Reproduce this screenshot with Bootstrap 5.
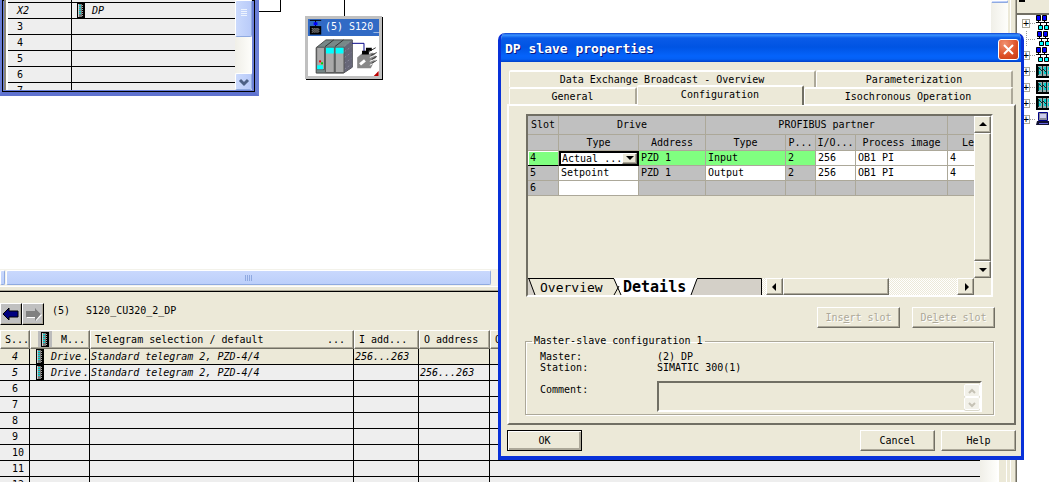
<!DOCTYPE html>
<html lang="en">
<head>
<meta charset="utf-8">
<meta name="viewport" content="width=device-width, initial-scale=1">
<title>DP slave properties</title>
<link href="https://cdn.jsdelivr.net/npm/bootstrap@5.3.0/dist/css/bootstrap.min.css" rel="stylesheet">
<style>
:root{--face:#ece9d8;--lo:#aca899;--dk:#716f64;--cell:#eee;--silver:#c0c0c0}
body{font:10px/16px "DejaVu Sans Mono","Liberation Mono",monospace;color:#000;background:#fff}
svg{display:block;flex:none}
.face{background:var(--face)}
button,select,textarea{font:inherit;color:inherit;border-radius:0}
.raised{background:var(--face);border:1px solid;border-color:#fff var(--dk) var(--dk) #fff;box-shadow:inset -1px -1px var(--lo);padding:0}
table{table-layout:fixed;border-collapse:separate;border-spacing:0}
th,td{padding:0;white-space:nowrap;overflow:hidden;font-weight:400}

/* work area */
.canvas{height:269px}
.rack{left:-2px;top:-4px;width:261px;height:100px;background:#6b7fd6;border:4px solid #6b7fd6;border-bottom-color:#5f72cf;box-shadow:inset 0 0 0 1px #000;padding:0 3px 3px 2px}
.rack-in{background:#fff;height:90px;border-left:2px solid #8a8678;padding-left:2px}
.lines td{height:16px;line-height:15px;background:var(--cell);border-bottom:1px solid #000;border-right:1px solid #000}
.lines td:last-child{border-right:0}
.rack .lines td:first-child{padding-left:9px}
.lines .cut td{height:3px;line-height:2px}
.xp-bar{width:17px;background:linear-gradient(90deg,#f0efe8,#fefefb)}
.xp-thumb{background:linear-gradient(90deg,#cbdafd,#b9cbf9);border:1px solid #fff;border-right-color:#8faae0;border-bottom-color:#8faae0;border-radius:2px;padding:0}
.wire{border:solid #000;border-width:0 1px 1px 0;left:259px;top:0;width:22px;height:12px}
.drop{background:#000;left:344px;top:0;width:1px;height:16px}
.node{left:305px;top:16px;width:77px;height:63px;background:#fff;border:3px solid var(--silver);box-shadow:1px 1px #000}
.node-cap{background:#316ac5;color:#fff;height:17px;line-height:15px}
.hbar{height:17px;padding:1px 0;gap:1px;background:#f3f2ea}
.hbar .xp-thumb{background:linear-gradient(#c9d8fd,#bccffa)}
.split{height:6px;border-bottom:1px solid #000;box-shadow:inset 0 1px #fff,inset 0 -1px var(--lo)}
.gutter{width:2px}

/* detail pane */
.crumb{height:38px;padding-top:11px}
.crumb button{width:22px;height:22px;background:var(--silver);border-color:#fff #000 #000 #fff}
.lines th{height:19px;line-height:17px;background:var(--face);border:1px solid;border-color:#fff var(--dk) var(--dk) #fff;box-shadow:inset -1px -1px var(--lo);padding:0 4px}
.detail td{padding-left:1px}
.detail td:first-child{padding-left:12px}
.detail tr.sel td{background:var(--face)}
.mod-cell{padding-left:5px}
.mod-cell svg{margin-right:7px}
.mod-head{padding-left:3px}
.frame{width:13px;border-left:2px solid #fff;box-shadow:inset -3px 0 var(--face),inset -4px 0 #fff}
.edge{width:7px;border-left:1px solid #fff;border-right:1px solid var(--dk);box-shadow:inset -1px 0 var(--lo)}
.tree{width:32px}
.tree-list{border-top:2px solid var(--dk);background:#fff;padding:0 0 0 5px}
.tree-list li{height:16px}
.twig{width:9px;height:9px;border:1px solid var(--lo);line-height:7px;background:#fff;text-align:center}

/* dialog */
.dlg{left:498px;top:33px;width:526px;height:427px;border-radius:7px 7px 0 0;background:var(--face);border:solid #0831d9;border-width:0 3px 4px;overflow:hidden}
.dlg-title{margin:0 -3px;height:29px;background:linear-gradient(#0b3fd0 0,#3a93ff 2px,#0a5be8 5px,#0054e3 14px,#0463fb 23px,#0460f5 26px,#0040c8);color:#fff;font-size:13px;font-weight:700;padding:3px 5px 0 7px;text-shadow:1px 1px #0a1883}
.dlg-x{width:21px;height:21px;border:1px solid #fff;border-radius:3px;padding:0;background:radial-gradient(circle at 30% 20%,#f0906f,#dd4f25 60%,#c43a14)}
.dlg-body{padding:8px 5px 0 6px}
.tabrow{margin:0 3px 0 2px;height:17px}
.tabrow button{background:var(--face);border:0;border-top:2px solid #fff;border-left:1px solid #fff;border-right:2px solid var(--lo);border-radius:2px 2px 0 0;padding:0;line-height:16px}
.tabrow .on{height:20px;margin-top:-2px;padding-bottom:2px;position:relative;z-index:2;border-right-color:var(--dk)}
.sheet{border:2px solid;border-color:#fff var(--dk) var(--dk) #fff;height:321px;padding:8px 20px 0 16px}
.gridbox{border:2px solid;border-color:var(--dk) #fff #fff var(--dk);height:183px;margin:0 1px 0 1px}
.pz th{background:var(--silver);text-align:center;height:16px;line-height:15px;border:solid var(--lo);border-width:0 1px 1px 0}
.pz .top th{height:19px;line-height:18px}
.pz td{height:15px;line-height:14px;background:var(--silver);border:solid var(--lo);border-width:0 1px 1px 0;padding-left:2px}
.pz tr>:last-child{border-right:0}
.pz .w{background:#fff}
.pz .go td{background:#80ff80}
.pz .go td.w{background:#fff}
.pz .go td:first-child{border-bottom-color:#000;box-shadow:inset 1px 1px #fff}
.pz .pick{padding:0;border:0;position:relative}
.pick select{appearance:none;display:block;width:100%;height:15px;border:2px solid #000;padding:0 0 0 1px;line-height:11px;background:#fff}
.pick span{right:2px;top:2px;width:15px;height:11px;pointer-events:none}
.sb{width:17px;height:17px;flex:none}
.dither{background:repeating-conic-gradient(#fff 0 25%,var(--face) 0 50%) 0 0/2px 2px}
.sheettabs{width:234px;height:17px;flex:none}
.sheettabs button{background:none;border:0;padding:1px 0 0;line-height:17px;position:relative}
.sheettabs .t1{width:90px;padding-left:12px;text-align:left;font-size:13px}
.sheettabs .t2{padding-left:5px;font-size:15px}
.acts{padding-top:2px;margin:8px -1px 0 0;gap:12px}
.off{width:83px;height:21px;color:var(--lo);text-shadow:1px 1px #fff}
.grp{border:1px solid var(--lo);box-shadow:1px 1px #fff,inset 1px 1px #fff;height:80px;margin:7px 0 0 0}
.grp legend{float:none;width:auto;font:inherit;line-height:12px;padding:0 2px;margin:0 0 0 6px}
.grp dl{display:grid;grid-template-columns:117px 1fr;line-height:11px;padding:4px 0 0 14px;margin:0}
.grp dt{font-weight:400}.grp dd{margin:0}
.note{display:grid;grid-template-columns:117px 1fr;padding:8px 11px 0 14px;line-height:18px}
.note textarea{display:block;width:100%;height:31px;resize:none;overflow:hidden;background:var(--face);border:2px solid;border-color:var(--dk) #fff #fff var(--dk)}
.spin{right:2px;top:3px;width:16px}
.spin button{width:16px;height:13px;padding:0;background:#f2f1e9;border:1px solid #fff;box-shadow:0 1px #dad8ca;border-radius:2px}
.foot{padding-top:5px;gap:6px}
.foot button{width:75px;height:21px}
.foot .ok{border:1px solid #000;box-shadow:inset 1px 1px #fff,inset -2px -2px var(--lo)}
</style>
</head>
<body class="overflow-hidden">
<svg width="0" height="0" class="position-absolute">
  <symbol id="mod" viewBox="0 0 8 15"><path d="M0 0h8v15H0z"/><path fill="#ccc" d="M1 1h1v13H1z"/><path fill="#777" d="M2 1h3v13H2z"/><path stroke="#0dd" stroke-width="2" stroke-dasharray="1 1" d="M3 2v10"/><path stroke="#aaa" stroke-dasharray="1 1" d="M5.500 2v11"/></symbol>
  <symbol id="net" viewBox="0 0 16 16"><path d="M0 7.500h16M2.500 5v3M8.500 5v3M4.500 8v3M10.500 8v3" stroke="#000" fill="none"/><path fill="#00f" stroke="#000" d="M.5.5h4v5h-4zM6.500.5h4v5h-4z"/><path fill="#0ff" stroke="#000" d="M2.500 10.500h4v4h-4zM8.500 10.500h4v4h-4z"/></symbol>
  <symbol id="rk" viewBox="0 0 16 16"><path d="M1 2h14v12H1z" fill="#9aa" stroke="#000" stroke-width="2"/><path stroke="#0cc" stroke-width="2" d="M4 4v8M9 4v8M13 4v8" stroke-dasharray="3 1"/><path stroke="#033" d="M2.500 4v8M6.500 3v10M10.500 3v10M3 5l3 3M7 6l4 4"/></symbol>
  <symbol id="pc" viewBox="0 0 16 16"><path fill="#889" stroke="#008" d="M2.500 1.500h9v8h-9z"/><path fill="#cce" d="M4 3h6v4H4z"/><path fill="#113" d="M1 10h12l1 4H0z"/><path stroke="#66d" d="M3 12.500h9"/></symbol>
</svg>

<div class="d-flex vh-100 position-relative">
  <main class="d-flex flex-column flex-fill overflow-hidden">
    <div class="d-flex canvas flex-shrink-0">
      <section class="flex-fill position-relative overflow-hidden" aria-label="Hardware layout">
        <div class="position-absolute wire"></div>
        <div class="position-absolute drop"></div>
        <div class="position-absolute rack">
          <div class="rack-in d-flex overflow-hidden">
            <div class="flex-fill overflow-hidden">
            <table class="lines w-100">
              <colgroup><col style="width:64px"><col></colgroup>
              <tr class="cut"><td></td><td></td></tr>
              <tr class="fst-italic"><td>X2</td><td><div class="d-flex mod-cell"><svg width="8" height="15"><use href="#mod"/></svg>DP</div></td></tr>
              <tr><td>3</td><td></td></tr><tr><td>4</td><td></td></tr><tr><td>5</td><td></td></tr><tr><td>6</td><td></td></tr><tr><td>7</td><td></td></tr>
            </table>
            </div>
            <div class="xp-bar d-flex flex-column justify-content-between flex-shrink-0">
              <div class="xp-thumb d-flex justify-content-center" style="height:37px"><svg width="8" height="20"><path stroke="#eef4fe" d="M1 8.500h6M1 10.500h6M1 12.500h6M1 14.500h6"/></svg></div>
              <button class="xp-thumb" aria-label="Scroll down" style="height:17px"><svg width="14" height="14" class="mx-auto"><path d="M3 5l4 4 4-4" fill="none" stroke="#4d6185" stroke-width="3"/></svg></button>
            </div>
          </div>
        </div>
        <div class="position-absolute node">
          <div class="node-cap d-flex text-nowrap"><svg width="17" height="17" viewBox="0 0 18 17"><path d="M2 1h12M8 1v6" stroke="#000"/><path fill="#00f" d="M6 3h4v3H6z"/><path d="M2 7h12v9H2z"/><path stroke="#bbb" stroke-dasharray="1 1" d="M4 9.500h8M5 10.500h8M4 11.500h8M5 12.500h8M4 13.500h8"/></svg>(5) S120_</div>
          <svg width="71" height="40" viewBox="0 0 72 41"><path fill="#788" stroke="#444" d="M8 12l10-8h27v28l-9 6H8z"/><path fill="#667" d="M36 12l9-8v28l-9 6z"/><path d="M37 10l7-5M37 16l7-5M37 22l7-5M37 28l7-5M37 34l7-5" stroke="#889" stroke-dasharray="2 2"/><path stroke="#333" d="M17 11l9-7M27 11l9-7"/><path fill="#aaa" stroke="#555" d="M8.500 11.500h8v23h-8zM17.500 11.500h9v26h-9zM27.500 11.500h9v26h-9z"/><path fill="#0ff" d="M18 12h8v6h-8zM28 12h8v6h-8zM9 30h6v4H9z"/><path fill="red" d="M11 25h2v2h-2z"/><path fill="#0c0" d="M13 27h2v2h-2z"/><path fill="none" stroke="#008" d="M45 7.500h12v10"/><path fill="#888" d="M50 22l6-5h10l4 4-6 12H50z"/><path stroke="#fff" d="M62 18l7-3M63 22l7-3M63 26l7-3M63 30l7-4"/><path stroke="#333" d="M62 16l7-4M64 20l6-3M65 24l5-3M65 28l5-3"/><path d="M55 15h4v-3h6v3h-3v4h-7z"/><path stroke="#fff" stroke-width="3" d="M53 29l5-4"/><path fill="#b00" d="M72 36v5h-5z"/></svg>
        </div>
      </section>
      <div class="xp-bar"><div class="xp-thumb" style="height:3px"></div></div>
      <div class="face gutter"></div>
    </div>
    <div class="hbar d-flex flex-shrink-0">
      <div class="xp-thumb" style="width:5px"></div>
      <div class="xp-thumb d-flex align-items-center justify-content-center" style="width:485px"><svg width="10" height="8"><path stroke="#8fa9e0" d="M1.500 1v6M3.500 1v6M5.500 1v6M7.500 1v6"/></svg></div>
    </div>
    <div class="split face flex-shrink-0"></div>
    <section class="d-flex flex-fill overflow-hidden" aria-label="Slave details">
      <div class="flex-fill d-flex flex-column overflow-hidden">
        <div class="crumb face d-flex flex-shrink-0">
          <button class="raised" aria-label="Back"><svg width="20" height="20"><path fill="#000080" stroke="#000" d="M2 10l6-6v3h9v6H8v3z"/></svg></button>
          <button class="raised" aria-label="Forward"><svg width="20" height="20"><path fill="#fff" d="M19 11l-6-6v3H4v6h9v3z"/><path fill="#808080" d="M18 10l-6-6v3H3v6h9v4z"/></svg></button>
          <span class="ps-2">(5)</span><span class="ps-3">S120_CU320_2_DP</span>
        </div>
        <table class="lines detail w-100">
          <colgroup><col style="width:30px"><col style="width:60px"><col style="width:264px"><col style="width:65px"><col style="width:71px"><col></colgroup>
          <tr><th>S...</th><th><div class="d-flex justify-content-between mod-head"><svg width="14" height="16" viewBox="-3 -1 14 16"><path fill="#bbb" d="M-3-1h14v17H-3z"/><use href="#mod" width="8" height="15"/></svg>M...</div></th><th><div class="d-flex justify-content-between pe-1"><span>Telegram selection / default</span><span>...</span></div></th><th>I add...</th><th>O address</th><th>O</th></tr>
          <tr class="sel fst-italic"><td>4</td><td><div class="d-flex mod-cell"><svg width="8" height="15"><use href="#mod"/></svg><span>Drive</span><span class="ms-auto">.</span></div></td><td>Standard telegram 2, PZD-4/4</td><td>256...263</td><td></td><td></td></tr>
          <tr class="fst-italic"><td>5</td><td><div class="d-flex mod-cell"><svg width="8" height="15"><use href="#mod"/></svg><span>Drive</span><span class="ms-auto">.</span></div></td><td>Standard telegram 2, PZD-4/4</td><td></td><td>256...263</td><td></td></tr>
          <tr><td>6</td><td></td><td></td><td></td><td></td><td></td></tr>
          <tr><td>7</td><td></td><td></td><td></td><td></td><td></td></tr>
          <tr><td>8</td><td></td><td></td><td></td><td></td><td></td></tr>
          <tr><td>9</td><td></td><td></td><td></td><td></td><td></td></tr>
          <tr><td>10</td><td></td><td></td><td></td><td></td><td></td></tr>
          <tr><td>11</td><td></td><td></td><td></td><td></td><td></td></tr>
          <tr><td>12</td><td></td><td></td><td></td><td></td><td></td></tr>
        </table>
      </div>
      <div class="xp-bar flex-shrink-0"></div>
      <div class="frame face flex-shrink-0"></div>
    </section>
  </main>
  <div class="edge face flex-shrink-0"></div>
  <aside class="tree face d-flex flex-column flex-shrink-0 overflow-hidden">
    <svg width="32" height="13"><path stroke="#000" stroke-width="2" d="M2 1h6"/></svg>
    <ul class="tree-list list-unstyled mb-0 flex-fill">
      <li class="d-flex align-items-center"><span class="twig">+</span><svg width="22" height="16"><path stroke="#999" stroke-dasharray="1 1" d="M0 8.500h5"/><use href="#net" x="6" width="16" height="16"/></svg></li>
      <li class="d-flex align-items-center"><svg width="31" height="16"><path stroke="#999" stroke-dasharray="1 1" d="M4 8.500h10M4.500 0v16"/><use href="#net" x="15" width="16" height="16"/></svg></li>
      <li class="d-flex align-items-center"><span class="twig">+</span><svg width="22" height="16"><path stroke="#999" stroke-dasharray="1 1" d="M0 8.500h5"/><use href="#net" x="6" width="16" height="16"/></svg></li>
      <li class="d-flex align-items-center"><span class="twig">+</span><svg width="22" height="16"><path stroke="#999" stroke-dasharray="1 1" d="M0 8.500h5"/><use href="#rk" x="6" width="16" height="16"/></svg></li>
      <li class="d-flex align-items-center"><span class="twig">+</span><svg width="22" height="16"><path stroke="#999" stroke-dasharray="1 1" d="M0 8.500h5"/><use href="#rk" x="6" width="16" height="16"/></svg></li>
      <li class="d-flex align-items-center"><span class="twig">+</span><svg width="22" height="16"><path stroke="#999" stroke-dasharray="1 1" d="M0 8.500h5"/><use href="#rk" x="6" width="16" height="16"/></svg></li>
      <li class="d-flex align-items-center"><span class="twig">+</span><svg width="22" height="16"><path stroke="#999" stroke-dasharray="1 1" d="M0 8.500h5"/><use href="#pc" x="6" width="16" height="16"/></svg></li>
    </ul>
  </aside>

  <div class="dlg position-absolute" role="dialog" aria-labelledby="dlgTitle">
    <div class="dlg-title d-flex align-items-center justify-content-between"><span id="dlgTitle">DP slave properties</span>
      <button class="dlg-x" aria-label="Close"><svg width="19" height="19"><path d="M5 5l9 9M14 5l-9 9" stroke="#fff" stroke-width="2"/></svg></button></div>
    <div class="dlg-body">
      <div class="tabrow d-flex"><button style="width:307px">Data Exchange Broadcast - Overview</button><button class="flex-fill">Parameterization</button></div>
      <div class="tabrow d-flex"><button style="width:128px">General</button><button class="on" style="width:167px">Configuration</button><button class="flex-fill">Isochronous Operation</button></div>
      <div class="sheet">
        <div class="gridbox d-flex flex-column">
          <div class="d-flex flex-fill">
            <div class="flex-fill">
              <table class="pz w-100">
                <colgroup><col style="width:31px"><col style="width:80px"><col style="width:67px"><col style="width:80px"><col style="width:30px"><col style="width:40px"><col style="width:92px"><col></colgroup>
                <tr class="top"><th>Slot</th><th colspan="2">Drive</th><th colspan="4">PROFIBUS partner</th><th></th></tr>
                <tr><th></th><th>Type</th><th>Address</th><th>Type</th><th>P...</th><th>I/O...</th><th>Process image</th><th class="text-end">Le</th></tr>
                <tr class="go"><td>4</td><td class="pick"><select aria-label="Type, slot 4"><option>Actual ...</option></select><span class="raised position-absolute"><svg width="13" height="9"><path d="M3 2h8L7 6z"/></svg></span></td><td>PZD 1</td><td>Input</td><td>2</td><td class="w">256</td><td class="w">OB1 PI</td><td class="w">4</td></tr>
                <tr><td>5</td><td class="w">Setpoint</td><td>PZD 1</td><td class="w">Output</td><td>2</td><td class="w">256</td><td class="w">OB1 PI</td><td class="w">4</td></tr>
                <tr><td>6</td><td class="w"></td><td></td><td></td><td></td><td></td><td></td><td></td></tr>
              </table>
            </div>
            <div class="d-flex flex-column flex-shrink-0">
              <button class="raised sb" aria-label="Scroll up"><svg width="15" height="15"><path d="M4 9h8L8 5z"/></svg></button>
              <div class="raised flex-fill"></div>
              <button class="raised sb" aria-label="Scroll down"><svg width="15" height="15"><path d="M4 6h8l-4 4z"/></svg></button>
            </div>
          </div>
          <div class="d-flex">
            <div class="sheettabs position-relative d-flex">
              <svg class="position-absolute top-0 start-0" width="234" height="17"><path fill="#d4d0c8" d="M0 0h234v17H0z"/><path fill="#ece9d8" d="M1 0h85l7 17H7z"/><path fill="#fff" d="M86 0h83l-6 17H93z"/><path fill="none" stroke="#000" d="M0 .5h86M169 .5h64.500V17M1 1l6 16M86 1l7 16M91 8l-5 9M169 1l-6 16"/></svg>
              <button class="t1">Overview</button><button class="t2 fw-bold">Details</button>
            </div>
            <div class="d-flex flex-fill dither">
              <button class="raised sb ms-1" aria-label="Scroll left"><svg width="15" height="15"><path d="M9 4v8L5 8z"/></svg></button>
              <div class="raised" style="width:106px"></div>
              <button class="raised sb ms-auto" aria-label="Scroll right"><svg width="15" height="15"><path d="M7 4v8l4-4z"/></svg></button>
            </div>
            <div class="sb face"></div>
          </div>
        </div>
        <div class="acts d-flex justify-content-end">
          <button class="raised off" disabled>Ins<u>e</u>rt slot</button><button class="raised off" disabled>De<u>l</u>ete slot</button>
        </div>
        <fieldset class="grp"><legend>Master-slave configuration 1</legend>
          <dl><dt>Master:</dt><dd>(2) DP</dd><dt>Station:</dt><dd>SIMATIC 300(1)</dd></dl>
          <div class="note"><label for="cmt">Comment:</label><div class="position-relative"><textarea id="cmt"></textarea>
            <div class="spin position-absolute d-flex flex-column"><button aria-label="Up"><svg width="14" height="10"><path d="M4 7l3-3 3 3" fill="none" stroke="#c5c2b5" stroke-width="2"/></svg></button><button aria-label="Down"><svg width="14" height="10"><path d="M4 4l3 3 3-3" fill="none" stroke="#c5c2b5" stroke-width="2"/></svg></button></div></div></div>
        </fieldset>
      </div>
      <div class="foot d-flex"><button class="raised ok me-auto">OK</button><button class="raised">Cancel</button><button class="raised">Help</button></div>
    </div>
  </div>
</div>
<script src="https://cdn.jsdelivr.net/npm/bootstrap@5.3.0/dist/js/bootstrap.bundle.min.js"></script>
</body>
</html>
